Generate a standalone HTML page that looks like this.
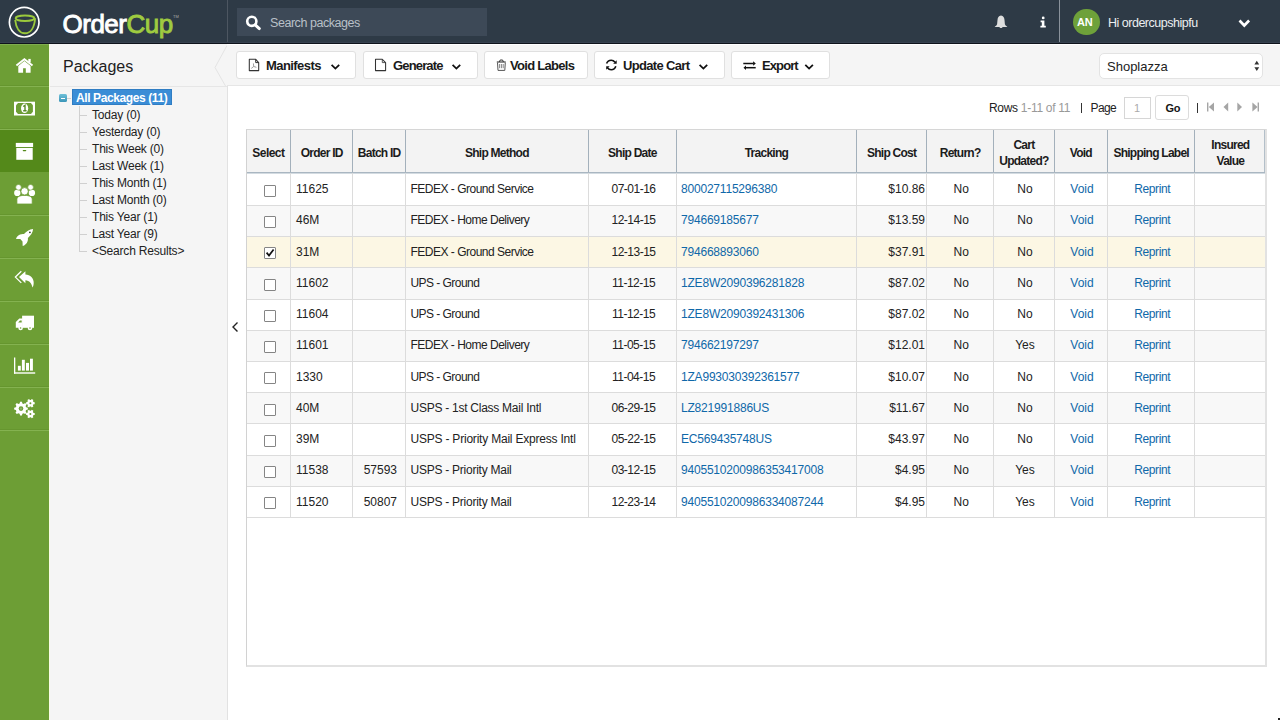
<!DOCTYPE html>
<html><head><meta charset="utf-8">
<style>
*{box-sizing:border-box;margin:0;padding:0}
html,body{width:1280px;height:720px;overflow:hidden;background:#fff;font-family:"Liberation Sans",sans-serif;color:#222}
.a{position:absolute}
.t{position:absolute;white-space:nowrap;line-height:1}
#hdr{left:0;top:0;width:1280px;height:44px;background:#2e3a46;border-bottom:1px solid #0e131b}
#side{left:0;top:44px;width:49px;height:676px;background:#6d9e35}
.sep{position:absolute;left:0;width:49px;height:1px;background:#84b250;box-shadow:0 -1px 0 #66962f}
#panel{left:49px;top:44px;width:179px;height:676px;background:#f5f5f5;border-left:1px solid #fafce6}
#tb{left:227px;top:44px;width:1053px;height:42px;background:#f5f5f5;border-bottom:1px solid #e6e6e6;border-top:1px solid #fff}
.btn{position:absolute;top:51px;height:28px;background:#fff;border:1px solid #e0e0e0;border-radius:3px}
.bt{position:absolute;top:58.5px;font-weight:bold;font-size:13px;color:#1a1a1a;letter-spacing:-0.55px;white-space:nowrap;line-height:1}
svg{position:absolute;overflow:visible}
.th{position:absolute;text-align:center;font-weight:bold;font-size:12px;color:#1c1c1c;line-height:16px;letter-spacing:-0.75px;white-space:nowrap}
.td{position:absolute;font-size:12px;color:#222;line-height:14px;white-space:nowrap}
.m{letter-spacing:-0.4px}
.lk{color:#0f68a9}
.cb{position:absolute;width:12px;height:12px;border:1px solid #858585;background:#fff;border-radius:1px}
.tr{position:absolute;font-size:12px;color:#222;line-height:14px;white-space:nowrap;letter-spacing:-0.2px}

</style></head><body>
<!-- HEADER -->
<div id="hdr" class="a"></div>
<div class="a" style="left:0;top:42px;width:1280px;height:1px;background:#37414f"></div>
<svg style="left:0;top:0" width="50" height="44" viewBox="0 0 50 44">
  <circle cx="24.2" cy="22.2" r="14.8" fill="none" stroke="#fff" stroke-width="1.7"/>
  <path d="M15.2 20 C16 28 19.6 33.3 25 33.3 C30.6 33.3 34.4 27.5 35.1 18.3" fill="none" stroke="#9bc93c" stroke-width="1.9"/>
  <ellipse cx="25" cy="18.3" rx="9.3" ry="2.7" fill="none" stroke="#9bc93c" stroke-width="2"/>
</svg>
<div class="t" style="left:62.5px;top:11px;font-size:26px;letter-spacing:-0.5px;color:#fff;-webkit-text-stroke:0.9px #fff">Order<span style="color:#9fcb40;-webkit-text-stroke:0.9px #9fcb40">Cup</span></div>
<div class="t" style="left:173px;top:15px;font-size:4px;color:#aaa">TM</div>
<div class="a" style="left:227px;top:0;width:1px;height:42px;background:#4d5661"></div>
<div class="a" style="left:237px;top:8px;width:250px;height:28px;background:#3d4957"></div>
<svg style="left:245px;top:15px" width="17" height="15" viewBox="0 0 17 15">
  <circle cx="6.8" cy="6.3" r="4.6" fill="none" stroke="#fff" stroke-width="2.6"/>
  <path d="M10.2 9.8 L14.3 13.6" stroke="#fff" stroke-width="3" stroke-linecap="round"/>
</svg>
<div class="t" style="left:270px;top:17px;font-size:12.5px;color:#b9c0c8;letter-spacing:-0.45px">Search packages</div>
<svg style="left:988px;top:10px" width="26" height="24" viewBox="0 0 26 24">
  <path d="M13 5.6 C10.6 5.8 9.7 7.6 9.5 10 L9.1 14.3 C8.8 15.6 7.6 16.3 6.6 16.9 L19.4 16.9 C18.4 16.3 17.2 15.6 16.9 14.3 L16.5 10 C16.3 7.6 15.4 5.8 13 5.6 Z" fill="#dedede"/>
  <path d="M11.3 16.8 L14.7 16.8 C14.4 18.4 11.6 18.4 11.3 16.8 Z" fill="#dedede"/>
</svg>
<svg style="left:1039px;top:15px" width="9" height="14" viewBox="0 0 9 14">
  <circle cx="4.2" cy="2.9" r="1.4" fill="#fff"/>
  <path d="M1.6 5.6 L5.4 5.6 L5.4 10.8 L6.8 10.8 L6.8 12.5 L1.4 12.5 L1.4 10.8 L2.8 10.8 L2.8 7.3 L1.6 7.3 Z" fill="#fff"/>
</svg>
<div class="a" style="left:1059px;top:0;width:1px;height:42px;background:#8a929b"></div>
<div class="a" style="left:1073px;top:8.5px;width:26.5px;height:26.5px;border-radius:50%;background:#6ea13a"></div>
<div class="t" style="left:1077px;top:17px;font-size:11px;font-weight:bold;color:#fff;letter-spacing:-0.3px">AN</div>
<div class="t" style="left:1108px;top:17px;font-size:12.5px;color:#eceef0;letter-spacing:-0.49px">Hi ordercupshipfu</div>
<svg style="left:1238px;top:19px" width="13" height="9" viewBox="0 0 13 9">
  <path d="M1.5 1.5 L6.3 6.5 L11.1 1.5" fill="none" stroke="#fff" stroke-width="2.6"/>
</svg>

<!-- SIDEBAR -->
<div id="side" class="a"></div>
<div class="a" style="left:0;top:44px;width:49px;height:1px;background:#80ad4f"></div>
<div class="a" style="left:0;top:130px;width:49px;height:42px;background:#54891a"></div>
<div class="sep" style="top:86px"></div>
<div class="sep" style="top:129px"></div>
<div class="sep" style="top:215px"></div>
<div class="sep" style="top:258px"></div>
<div class="sep" style="top:301px"></div>
<div class="sep" style="top:344px"></div>
<div class="sep" style="top:387px"></div>
<div class="sep" style="top:430px"></div>


<!-- SIDEBAR ICONS -->
<svg style="left:10px;top:52px" width="30" height="30" viewBox="0 0 30 30">
  <path d="M8.3 13.9 L14.4 9 L20.6 13.9 L20.6 20.8 L15.8 20.8 L15.8 16.3 L13.1 16.3 L13.1 20.8 L8.3 20.8 Z" fill="#fff"/>
  <path d="M6.4 13.6 L14.4 7.3 L22.5 13.6" fill="none" stroke="#fff" stroke-width="1.9" stroke-linejoin="miter"/>
  <rect x="18.3" y="6.9" width="2.4" height="3.6" fill="#fff"/>
</svg>
<svg style="left:10px;top:94px" width="30" height="30" viewBox="0 0 30 30">
  <rect x="4" y="7.7" width="21" height="13.8" fill="#fff"/>
  <path d="M8 9 L21 9 L22.9 11.3 L22.9 17.7 L21 20 L8 20 L6 17.7 L6 11.3 Z" fill="#6d9e35"/>
  <ellipse cx="14.6" cy="14.3" rx="3.6" ry="4.8" fill="#fff"/>
  <path d="M13.2 12.5 L15 11.3 L15 16.8 M13.2 16.8 L16.6 16.8" fill="none" stroke="#5a8a28" stroke-width="1.4"/>
</svg>
<svg style="left:10px;top:136px" width="30" height="30" viewBox="0 0 30 30">
  <rect x="5.8" y="6.9" width="17.3" height="4.1" fill="#fff"/>
  <rect x="6.3" y="11.9" width="16.4" height="11.9" fill="#fff"/>
  <rect x="12.7" y="13.9" width="3.6" height="1.4" rx="0.7" fill="#54891a"/>
</svg>
<svg style="left:10px;top:179px" width="30" height="30" viewBox="0 0 30 30">
  <ellipse cx="7.3" cy="13.9" rx="3.2" ry="3.1" fill="#fff"/>
  <ellipse cx="21.9" cy="13.9" rx="3.2" ry="3.1" fill="#fff"/>
  <circle cx="8.5" cy="8.3" r="2.8" fill="#fff" stroke="#6d9e35" stroke-width="0.6"/>
  <circle cx="20.6" cy="8.3" r="2.8" fill="#fff" stroke="#6d9e35" stroke-width="0.6"/>
  <path d="M6.9 25 L6.9 20.5 C6.9 17.8 9.5 16.4 14.6 16.4 C19.7 16.4 22.2 17.8 22.2 20.5 L22.2 25 Z" fill="#fff" stroke="#6d9e35" stroke-width="0.8"/>
  <circle cx="14.6" cy="12.3" r="3.7" fill="#fff" stroke="#6d9e35" stroke-width="0.8"/>
</svg>
<svg style="left:10px;top:222px" width="30" height="30" viewBox="0 0 30 30">
  <path d="M23.1 6.9 C19.2 7.2 16.3 9.5 14 12 C11.8 11.7 9.3 12.3 7.5 14.2 C6.8 15 6.2 16 6 16.9 L10.3 17.1 L12.5 19.4 L12.7 24.1 C13.6 23.9 14.8 23.1 15.6 22.3 C17.5 20.5 18.2 18 17.9 15.9 C20.5 13.5 22.9 10.5 23.1 6.9 Z" fill="#fff"/>
  <circle cx="19.9" cy="10.3" r="0.9" fill="#2e4a1a"/>
</svg>
<svg style="left:10px;top:265px" width="30" height="30" viewBox="0 0 30 30">
  <path d="M11.3 6.3 L5.4 12.1 L11.3 17.9" fill="none" stroke="#fff" stroke-width="1.3"/>
  <path d="M9 12.1 L15.4 6.25 L15.4 9.6 C20.3 9.9 23.9 13.3 23.7 18 C23.6 20 23.2 21.5 22.4 22.6 C21.8 18.5 19.4 15.6 15.4 15.3 L15.4 18.3 Z" fill="#fff"/>
</svg>
<svg style="left:10px;top:308px" width="30" height="30" viewBox="0 0 30 30">
  <rect x="12.1" y="7.7" width="11.9" height="12.1" fill="#fff"/>
  <path d="M5.8 19.8 L5.8 13.9 L9.3 10.4 L12.6 10.4 L12.6 19.8 Z" fill="#fff"/>
  <path d="M8.1 14.4 L10 12.5 L11.7 12.5 L11.7 14.4 Z" fill="#6d9e35"/>
  <circle cx="10.6" cy="20" r="2.3" fill="#fff"/>
  <circle cx="20" cy="20" r="2.3" fill="#fff"/>
  <circle cx="10.6" cy="20" r="0.8" fill="#6d9e35"/>
  <circle cx="20" cy="20" r="0.8" fill="#6d9e35"/>
</svg>
<svg style="left:10px;top:351px" width="30" height="30" viewBox="0 0 30 30">
  <rect x="4" y="6.5" width="1.3" height="16.2" fill="#fff"/>
  <rect x="4" y="21.3" width="21.2" height="1.4" fill="#fff"/>
  <rect x="7.9" y="14.8" width="2.9" height="4.8" fill="#fff"/>
  <rect x="11.9" y="8.8" width="2.9" height="10.8" fill="#fff"/>
  <rect x="16" y="11.9" width="3" height="7.7" fill="#fff"/>
  <rect x="20" y="7.7" width="2.9" height="11.9" fill="#fff"/>
</svg>
<svg style="left:10px;top:394px" width="30" height="30" viewBox="0 0 30 30">
  <path d="M16.13 13.25 L17.84 13.66 L17.84 15.54 L16.13 15.95 L15.58 17.27 L16.50 18.77 L15.17 20.10 L13.67 19.18 L12.35 19.73 L11.94 21.44 L10.06 21.44 L9.65 19.73 L8.33 19.18 L6.83 20.10 L5.50 18.77 L6.42 17.27 L5.87 15.95 L4.16 15.54 L4.16 13.66 L5.87 13.25 L6.42 11.93 L5.50 10.43 L6.83 9.10 L8.33 10.02 L9.65 9.47 L10.06 7.76 L11.94 7.76 L12.35 9.47 L13.67 10.02 L15.17 9.10 L16.50 10.43 L15.58 11.93 Z" fill="#fff"/>
  <circle cx="11" cy="14.6" r="2.3" fill="#6d9e35"/>
  <circle cx="11" cy="14.6" r="1.2" fill="#8fb865"/>
  <path d="M23.51 8.09 L24.69 8.23 L24.69 10.17 L23.51 10.31 L22.91 11.34 L23.38 12.43 L21.71 13.40 L21.00 12.45 L19.80 12.45 L19.09 13.40 L17.42 12.43 L17.89 11.34 L17.29 10.31 L16.11 10.17 L16.11 8.23 L17.29 8.09 L17.89 7.06 L17.42 5.97 L19.09 5.00 L19.80 5.95 L21.00 5.95 L21.71 5.00 L23.38 5.97 L22.91 7.06 Z" fill="#fff"/>
  <circle cx="20.4" cy="9.2" r="1" fill="#6d9e35"/>
  <path d="M23.51 18.89 L24.69 19.03 L24.69 20.97 L23.51 21.11 L22.91 22.14 L23.38 23.23 L21.71 24.20 L21.00 23.25 L19.80 23.25 L19.09 24.20 L17.42 23.23 L17.89 22.14 L17.29 21.11 L16.11 20.97 L16.11 19.03 L17.29 18.89 L17.89 17.86 L17.42 16.77 L19.09 15.80 L19.80 16.75 L21.00 16.75 L21.71 15.80 L23.38 16.77 L22.91 17.86 Z" fill="#fff"/>
  <circle cx="20.4" cy="20" r="1" fill="#6d9e35"/>
</svg>

<!-- PANEL -->
<div id="panel" class="a"></div>
<div class="t" style="left:63px;top:58.5px;font-size:16px;color:#1e1e1e">Packages</div>
<div class="a" style="left:50px;top:86px;width:177px;height:1px;background:#e6e6e6"></div>
<div class="a" style="left:227px;top:86px;width:1px;height:634px;background:#e2e2e2"></div>
<svg style="left:210px;top:44px" width="20" height="44" viewBox="0 0 20 44"><path d="M17 1.5 L5 23.5 L15.5 42" fill="none" stroke="#e4e4e4" stroke-width="1"/></svg>

<!-- TOOLBAR -->
<div id="tb" class="a"></div>
<div class="btn" style="left:236px;width:120px"></div>
<div class="btn" style="left:363px;width:115px"></div>
<div class="btn" style="left:484px;width:104px"></div>
<div class="btn" style="left:594px;width:131px"></div>
<div class="btn" style="left:731px;width:99px"></div>
<div class="bt" style="left:266px;letter-spacing:-0.57px">Manifests</div>
<div class="bt" style="left:393px;letter-spacing:-0.84px">Generate</div>
<div class="bt" style="left:510px;letter-spacing:-0.71px">Void Labels</div>
<div class="bt" style="left:623px;letter-spacing:-0.66px">Update Cart</div>
<div class="bt" style="left:762px;letter-spacing:-0.9px">Export</div>
<div class="a" style="left:1099px;top:53px;width:164px;height:26px;background:#fff;border:1px solid #e3e3e3;border-radius:5px"></div>
<div class="t" style="left:1107px;top:60px;font-size:13px;color:#222">Shoplazza</div>


<!-- TOOLBAR ICONS -->
<svg style="left:244px;top:54px" width="30" height="24" viewBox="0 0 30 24">
  <path d="M5.3 5.3 L11.7 5.3 L14.7 8.6 L14.7 16.6 L5.3 16.6 Z" fill="none" stroke="#333" stroke-width="1.05" stroke-linejoin="round"/>
  <path d="M11.7 5.3 L11.7 8.6 L14.7 8.6" fill="none" stroke="#333" stroke-width="1"/>
  <path d="M7.3 14.4 L9.7 12.5 L12.4 13.3 M9.7 12.5 L9.4 9.4" fill="none" stroke="#888" stroke-width="0.8"/>
</svg>
<svg style="left:372px;top:54px" width="24" height="24" viewBox="0 0 24 24">
  <path d="M3.5 5.3 L10.3 5.3 L13.6 8.6 L13.6 16.6 L3.5 16.6 Z" fill="none" stroke="#333" stroke-width="1.05" stroke-linejoin="round"/>
  <path d="M10.3 5.3 L10.3 8.6 L13.6 8.6" fill="none" stroke="#444" stroke-width="0.9"/>
</svg>
<svg style="left:492px;top:54px" width="24" height="24" viewBox="0 0 24 24">
  <path d="M4.8 8 L13.7 8" stroke="#333" stroke-width="1.1"/>
  <path d="M7.4 8 L8.2 6 L10.6 6 L11.4 8" fill="none" stroke="#333" stroke-width="1"/>
  <path d="M5.5 8.6 L6 16.4 L12.8 16.4 L13.3 8.6" fill="none" stroke="#555" stroke-width="1"/>
  <path d="M7.6 10 L7.6 14.2 M9.4 10 L9.4 14.2 M11.2 10 L11.2 14.2" stroke="#666" stroke-width="0.8"/>
</svg>
<svg style="left:600px;top:54px" width="24" height="24" viewBox="0 0 24 24">
  <path d="M6.6 9.6 C7.4 7.2 9.2 6.2 11.2 6.2 C12.8 6.2 14.1 7 15 8.2" fill="none" stroke="#111" stroke-width="1.6"/>
  <path d="M16.7 6.2 L16.7 9.8 L13.2 9.8 Z" fill="#111"/>
  <path d="M15.8 12.3 C15 14.7 13.2 15.7 11.2 15.7 C9.6 15.7 8.3 14.9 7.4 13.7" fill="none" stroke="#111" stroke-width="1.6"/>
  <path d="M6.2 15.7 L6.2 12.3 L9.6 12.3 Z" fill="#111"/>
</svg>
<svg style="left:738px;top:54px" width="24" height="24" viewBox="0 0 24 24">
  <path d="M5.3 9.5 L15.5 9.5" stroke="#111" stroke-width="1.5"/>
  <path d="M15.1 7.3 L17.8 9.5 L15.1 11.7 Z" fill="#111"/>
  <path d="M17.7 13.7 L7.6 13.7" stroke="#111" stroke-width="1.5"/>
  <path d="M8 11.5 L5.5 13.7 L8 15.9 Z" fill="#111"/>
</svg>
<svg style="left:0;top:0" width="1280" height="100" viewBox="0 0 1280 100">
  <path d="M331.6 64.9 L335.4 68.6 L339.2 64.9" fill="none" stroke="#111" stroke-width="1.8"/>
  <path d="M452.6 64.9 L456.4 68.6 L460.2 64.9" fill="none" stroke="#111" stroke-width="1.8"/>
  <path d="M699.6 64.9 L703.4 68.6 L707.2 64.9" fill="none" stroke="#111" stroke-width="1.8"/>
  <path d="M805.3 64.9 L809.1 68.6 L812.9 64.9" fill="none" stroke="#111" stroke-width="1.8"/>
</svg>
<!-- select arrows -->
<svg style="left:1254px;top:60px" width="6" height="12" viewBox="0 0 6 12">
  <path d="M0.4 4.6 L2.8 0.8 L5.2 4.6 Z M0.4 7.2 L2.8 11 L5.2 7.2 Z" fill="#333"/>
</svg>

<!-- TREE -->
<div class="a" style="left:78.5px;top:106px;width:1px;height:145px;background:#d0d0d0"></div>
<div class="a" style="left:79px;top:114.5px;width:8px;height:1px;background:#d0d0d0"></div>
<div class="tr" style="left:92px;top:108.0px">Today (0)</div>
<div class="a" style="left:79px;top:131.5px;width:8px;height:1px;background:#d0d0d0"></div>
<div class="tr" style="left:92px;top:125.0px">Yesterday (0)</div>
<div class="a" style="left:79px;top:148.5px;width:8px;height:1px;background:#d0d0d0"></div>
<div class="tr" style="left:92px;top:142.0px">This Week (0)</div>
<div class="a" style="left:79px;top:165.5px;width:8px;height:1px;background:#d0d0d0"></div>
<div class="tr" style="left:92px;top:159.0px">Last Week (1)</div>
<div class="a" style="left:79px;top:182.5px;width:8px;height:1px;background:#d0d0d0"></div>
<div class="tr" style="left:92px;top:176.0px">This Month (1)</div>
<div class="a" style="left:79px;top:199.5px;width:8px;height:1px;background:#d0d0d0"></div>
<div class="tr" style="left:92px;top:193.0px">Last Month (0)</div>
<div class="a" style="left:79px;top:216.5px;width:8px;height:1px;background:#d0d0d0"></div>
<div class="tr" style="left:92px;top:210.0px">This Year (1)</div>
<div class="a" style="left:79px;top:233.5px;width:8px;height:1px;background:#d0d0d0"></div>
<div class="tr" style="left:92px;top:227.0px">Last Year (9)</div>
<div class="a" style="left:79px;top:250.5px;width:8px;height:1px;background:#d0d0d0"></div>
<div class="tr" style="left:92px;top:244.0px">&lt;Search Results&gt;</div>
<div class="a" style="left:71.5px;top:89px;width:100px;height:16px;background:#3a8dd6;border:1px solid #2f7dc3"></div>
<div class="t" style="left:76px;top:92px;font-size:12px;font-weight:bold;color:#fff;letter-spacing:-0.4px">All Packages (11)</div>
<div class="a" style="left:58.5px;top:94px;width:8.5px;height:8px;background:linear-gradient(#6fc0d8,#3a95b8);border-radius:1.5px"></div>
<div class="a" style="left:60.5px;top:97.5px;width:4.5px;height:1.2px;background:#fff"></div>
<div class="a" style="left:67px;top:97.5px;width:4px;height:1px;background:#d0d0d0"></div>
<!-- collapse arrow -->
<svg style="left:231px;top:321px" width="8" height="12" viewBox="0 0 8 12"><path d="M6.5 1.5 L2 6 L6.5 10.5" fill="none" stroke="#222" stroke-width="1.4"/></svg>
<!-- PAGER -->
<div class="t" style="left:989px;top:101.5px;font-size:12px;color:#222;letter-spacing:-0.3px">Rows <span style="color:#999">1-11 of 11</span></div>
<div class="a" style="left:1080.5px;top:103px;width:1.4px;height:10px;background:#333"></div>
<div class="t" style="left:1090.5px;top:101.5px;font-size:12px;color:#222;letter-spacing:-0.6px">Page</div>
<div class="a" style="left:1124px;top:97px;width:26.5px;height:22px;border:1px solid #d6d6d6;background:#fff"></div>
<div class="t" style="left:1134px;top:103px;font-size:11px;color:#aaa">1</div>
<div class="a" style="left:1155px;top:95px;width:33.5px;height:24.5px;border:1px solid #dcdcdc;border-radius:3px;background:#fff"></div>
<div class="t" style="left:1165.5px;top:102.5px;font-size:11px;font-weight:bold;color:#151515;letter-spacing:-0.3px">Go</div>
<div class="a" style="left:1196.7px;top:103px;width:1.4px;height:10px;background:#333"></div>
<svg style="left:1207px;top:102px" width="60" height="10" viewBox="0 0 60 10">
 <rect x="0" y="0.5" width="1.4" height="9" fill="#a5a5a5"/><path d="M7 0.5 L1.8 5 L7 9.5 Z" fill="#a5a5a5"/>
 <path d="M21.2 0.5 L16.5 5 L21.2 9.5 Z" fill="#a5a5a5"/>
 <path d="M30.3 0.5 L35 5 L30.3 9.5 Z" fill="#a5a5a5"/>
 <path d="M45.4 0.5 L50.6 5 L45.4 9.5 Z" fill="#a5a5a5"/><rect x="50.6" y="0.5" width="1.4" height="9" fill="#a5a5a5"/>
</svg>
<!-- TABLE -->
<div class="a" style="left:246px;top:129px;width:1021px;height:538px;border:1px solid #d2d2d2;border-top-color:#d6d6d6;border-right:2px solid #e2e2e2;border-bottom:2px solid #e2e2e2"></div>
<div class="a" style="left:247px;top:130px;width:1018px;height:42px;background:#f3f3f3"></div>
<div class="a" style="left:247px;top:173.00px;width:1018px;height:32.00px;background:#ffffff"></div>
<div class="a" style="left:247px;top:205.00px;width:1018px;height:31.24px;background:#f8f8f8"></div>
<div class="a" style="left:247px;top:236.24px;width:1018px;height:31.24px;background:#fcf7e4"></div>
<div class="a" style="left:247px;top:267.48px;width:1018px;height:31.24px;background:#f8f8f8"></div>
<div class="a" style="left:247px;top:298.72px;width:1018px;height:31.24px;background:#ffffff"></div>
<div class="a" style="left:247px;top:329.96px;width:1018px;height:31.24px;background:#f8f8f8"></div>
<div class="a" style="left:247px;top:361.20px;width:1018px;height:31.24px;background:#ffffff"></div>
<div class="a" style="left:247px;top:392.44px;width:1018px;height:31.24px;background:#f8f8f8"></div>
<div class="a" style="left:247px;top:423.68px;width:1018px;height:31.24px;background:#ffffff"></div>
<div class="a" style="left:247px;top:454.92px;width:1018px;height:31.24px;background:#f8f8f8"></div>
<div class="a" style="left:247px;top:486.16px;width:1018px;height:31.24px;background:#ffffff"></div>
<div class="a" style="left:247px;top:204.80px;width:1018px;height:1px;background:#dcdcdc"></div>
<div class="a" style="left:247px;top:236.04px;width:1018px;height:1px;background:#dcdcdc"></div>
<div class="a" style="left:247px;top:267.28px;width:1018px;height:1px;background:#dcdcdc"></div>
<div class="a" style="left:247px;top:298.52px;width:1018px;height:1px;background:#dcdcdc"></div>
<div class="a" style="left:247px;top:329.76px;width:1018px;height:1px;background:#dcdcdc"></div>
<div class="a" style="left:247px;top:361.00px;width:1018px;height:1px;background:#dcdcdc"></div>
<div class="a" style="left:247px;top:392.24px;width:1018px;height:1px;background:#dcdcdc"></div>
<div class="a" style="left:247px;top:423.48px;width:1018px;height:1px;background:#dcdcdc"></div>
<div class="a" style="left:247px;top:454.72px;width:1018px;height:1px;background:#dcdcdc"></div>
<div class="a" style="left:247px;top:485.96px;width:1018px;height:1px;background:#dcdcdc"></div>
<div class="a" style="left:247px;top:517.20px;width:1018px;height:1px;background:#dcdcdc"></div>
<div class="a" style="left:247px;top:172px;width:1018px;height:1px;background:#a9b6c1"></div>
<div class="a" style="left:247px;top:173px;width:1018px;height:1px;background:#d3dbe1"></div>
<div class="a" style="left:1264px;top:130px;width:1px;height:42px;background:#b3bfc9"></div>
<div class="a" style="left:289.5px;top:130px;width:1px;height:42px;background:#a3b0bb"></div>
<div class="a" style="left:289.5px;top:173px;width:1px;height:344.4px;background:#dcdcdc"></div>
<div class="a" style="left:352.0px;top:130px;width:1px;height:42px;background:#a3b0bb"></div>
<div class="a" style="left:352.0px;top:173px;width:1px;height:344.4px;background:#dcdcdc"></div>
<div class="a" style="left:404.5px;top:130px;width:1px;height:42px;background:#a3b0bb"></div>
<div class="a" style="left:404.5px;top:173px;width:1px;height:344.4px;background:#dcdcdc"></div>
<div class="a" style="left:587.5px;top:130px;width:1px;height:42px;background:#a3b0bb"></div>
<div class="a" style="left:587.5px;top:173px;width:1px;height:344.4px;background:#dcdcdc"></div>
<div class="a" style="left:675.5px;top:130px;width:1px;height:42px;background:#a3b0bb"></div>
<div class="a" style="left:675.5px;top:173px;width:1px;height:344.4px;background:#dcdcdc"></div>
<div class="a" style="left:855.5px;top:130px;width:1px;height:42px;background:#a3b0bb"></div>
<div class="a" style="left:855.5px;top:173px;width:1px;height:344.4px;background:#dcdcdc"></div>
<div class="a" style="left:926.0px;top:130px;width:1px;height:42px;background:#a3b0bb"></div>
<div class="a" style="left:926.0px;top:173px;width:1px;height:344.4px;background:#dcdcdc"></div>
<div class="a" style="left:992.5px;top:130px;width:1px;height:42px;background:#a3b0bb"></div>
<div class="a" style="left:992.5px;top:173px;width:1px;height:344.4px;background:#dcdcdc"></div>
<div class="a" style="left:1053.5px;top:130px;width:1px;height:42px;background:#a3b0bb"></div>
<div class="a" style="left:1053.5px;top:173px;width:1px;height:344.4px;background:#dcdcdc"></div>
<div class="a" style="left:1106.5px;top:130px;width:1px;height:42px;background:#a3b0bb"></div>
<div class="a" style="left:1106.5px;top:173px;width:1px;height:344.4px;background:#dcdcdc"></div>
<div class="a" style="left:1194.0px;top:130px;width:1px;height:42px;background:#a3b0bb"></div>
<div class="a" style="left:1194.0px;top:173px;width:1px;height:344.4px;background:#dcdcdc"></div>
<div class="th" style="left:246.4px;width:44.0px;top:144.5px;letter-spacing:-0.55px">Select</div>
<div class="th" style="left:290.4px;width:62.5px;top:144.5px">Order ID</div>
<div class="th" style="left:352.9px;width:52.5px;top:144.5px">Batch ID</div>
<div class="th" style="left:405.4px;width:183.0px;top:144.5px">Ship Method</div>
<div class="th" style="left:588.4px;width:88.0px;top:144.5px">Ship Date</div>
<div class="th" style="left:676.4px;width:180.0px;top:144.5px">Tracking</div>
<div class="th" style="left:856.4px;width:70.5px;top:144.5px">Ship Cost</div>
<div class="th" style="left:926.9px;width:66.5px;top:144.5px">Return?</div>
<div class="th" style="left:993.4px;width:61.0px;top:136.5px">Cart<br>Updated?</div>
<div class="th" style="left:1054.4px;width:53.0px;top:144.5px">Void</div>
<div class="th" style="left:1107.4px;width:87.5px;top:144.5px">Shipping Label</div>
<div class="th" style="left:1194.9px;width:71.0px;top:136.5px">Insured<br>Value</div>
<div class="cb" style="left:264px;top:185.0px"></div>
<div class="td" style="left:296px;top:182.2px">11625</div>
<div class="td" style="left:410.5px;top:182.2px;letter-spacing:-0.5px">FEDEX - Ground Service</div>
<div class="td" style="left:589.5px;width:88px;text-align:center;top:182.2px;letter-spacing:-0.5px">07-01-16</div>
<div class="td lk" style="left:681px;top:182.2px;letter-spacing:-0.2px">800027115296380</div>
<div class="td" style="left:856px;width:69px;text-align:right;top:182.2px">$10.86</div>
<div class="td" style="left:928px;width:66.5px;text-align:center;top:182.2px">No</div>
<div class="td" style="left:994.5px;width:61px;text-align:center;top:182.2px">No</div>
<div class="td lk" style="left:1055.5px;width:53px;text-align:center;top:182.2px">Void</div>
<div class="td lk m" style="left:1108.5px;width:87.5px;text-align:center;top:182.2px">Reprint</div>
<div class="cb" style="left:264px;top:216.2px"></div>
<div class="td" style="left:296px;top:213.4px">46M</div>
<div class="td" style="left:410.5px;top:213.4px;letter-spacing:-0.5px">FEDEX - Home Delivery</div>
<div class="td" style="left:589.5px;width:88px;text-align:center;top:213.4px;letter-spacing:-0.5px">12-14-15</div>
<div class="td lk" style="left:681px;top:213.4px;letter-spacing:-0.2px">794669185677</div>
<div class="td" style="left:856px;width:69px;text-align:right;top:213.4px">$13.59</div>
<div class="td" style="left:928px;width:66.5px;text-align:center;top:213.4px">No</div>
<div class="td" style="left:994.5px;width:61px;text-align:center;top:213.4px">No</div>
<div class="td lk" style="left:1055.5px;width:53px;text-align:center;top:213.4px">Void</div>
<div class="td lk m" style="left:1108.5px;width:87.5px;text-align:center;top:213.4px">Reprint</div>
<div class="cb" style="left:264px;top:247.4px"></div>
<svg style="left:264px;top:247.4px" width="12" height="12" viewBox="0 0 12 12"><path d="M2.6 5.6 L5 8.6 L9.6 2.4" fill="none" stroke="#111" stroke-width="1.7"/></svg>
<div class="td" style="left:296px;top:244.6px">31M</div>
<div class="td" style="left:410.5px;top:244.6px;letter-spacing:-0.5px">FEDEX - Ground Service</div>
<div class="td" style="left:589.5px;width:88px;text-align:center;top:244.6px;letter-spacing:-0.5px">12-13-15</div>
<div class="td lk" style="left:681px;top:244.6px;letter-spacing:-0.2px">794668893060</div>
<div class="td" style="left:856px;width:69px;text-align:right;top:244.6px">$37.91</div>
<div class="td" style="left:928px;width:66.5px;text-align:center;top:244.6px">No</div>
<div class="td" style="left:994.5px;width:61px;text-align:center;top:244.6px">No</div>
<div class="td lk" style="left:1055.5px;width:53px;text-align:center;top:244.6px">Void</div>
<div class="td lk m" style="left:1108.5px;width:87.5px;text-align:center;top:244.6px">Reprint</div>
<div class="cb" style="left:264px;top:278.7px"></div>
<div class="td" style="left:296px;top:275.9px">11602</div>
<div class="td" style="left:410.5px;top:275.9px;letter-spacing:-0.55px">UPS - Ground</div>
<div class="td" style="left:589.5px;width:88px;text-align:center;top:275.9px;letter-spacing:-0.5px">11-12-15</div>
<div class="td lk" style="left:681px;top:275.9px;letter-spacing:-0.2px">1ZE8W2090396281828</div>
<div class="td" style="left:856px;width:69px;text-align:right;top:275.9px">$87.02</div>
<div class="td" style="left:928px;width:66.5px;text-align:center;top:275.9px">No</div>
<div class="td" style="left:994.5px;width:61px;text-align:center;top:275.9px">No</div>
<div class="td lk" style="left:1055.5px;width:53px;text-align:center;top:275.9px">Void</div>
<div class="td lk m" style="left:1108.5px;width:87.5px;text-align:center;top:275.9px">Reprint</div>
<div class="cb" style="left:264px;top:309.9px"></div>
<div class="td" style="left:296px;top:307.1px">11604</div>
<div class="td" style="left:410.5px;top:307.1px;letter-spacing:-0.55px">UPS - Ground</div>
<div class="td" style="left:589.5px;width:88px;text-align:center;top:307.1px;letter-spacing:-0.5px">11-12-15</div>
<div class="td lk" style="left:681px;top:307.1px;letter-spacing:-0.2px">1ZE8W2090392431306</div>
<div class="td" style="left:856px;width:69px;text-align:right;top:307.1px">$87.02</div>
<div class="td" style="left:928px;width:66.5px;text-align:center;top:307.1px">No</div>
<div class="td" style="left:994.5px;width:61px;text-align:center;top:307.1px">No</div>
<div class="td lk" style="left:1055.5px;width:53px;text-align:center;top:307.1px">Void</div>
<div class="td lk m" style="left:1108.5px;width:87.5px;text-align:center;top:307.1px">Reprint</div>
<div class="cb" style="left:264px;top:341.2px"></div>
<div class="td" style="left:296px;top:338.4px">11601</div>
<div class="td" style="left:410.5px;top:338.4px;letter-spacing:-0.5px">FEDEX - Home Delivery</div>
<div class="td" style="left:589.5px;width:88px;text-align:center;top:338.4px;letter-spacing:-0.5px">11-05-15</div>
<div class="td lk" style="left:681px;top:338.4px;letter-spacing:-0.2px">794662197297</div>
<div class="td" style="left:856px;width:69px;text-align:right;top:338.4px">$12.01</div>
<div class="td" style="left:928px;width:66.5px;text-align:center;top:338.4px">No</div>
<div class="td" style="left:994.5px;width:61px;text-align:center;top:338.4px">Yes</div>
<div class="td lk" style="left:1055.5px;width:53px;text-align:center;top:338.4px">Void</div>
<div class="td lk m" style="left:1108.5px;width:87.5px;text-align:center;top:338.4px">Reprint</div>
<div class="cb" style="left:264px;top:372.4px"></div>
<div class="td" style="left:296px;top:369.6px">1330</div>
<div class="td" style="left:410.5px;top:369.6px;letter-spacing:-0.55px">UPS - Ground</div>
<div class="td" style="left:589.5px;width:88px;text-align:center;top:369.6px;letter-spacing:-0.5px">11-04-15</div>
<div class="td lk" style="left:681px;top:369.6px;letter-spacing:-0.2px">1ZA993030392361577</div>
<div class="td" style="left:856px;width:69px;text-align:right;top:369.6px">$10.07</div>
<div class="td" style="left:928px;width:66.5px;text-align:center;top:369.6px">No</div>
<div class="td" style="left:994.5px;width:61px;text-align:center;top:369.6px">No</div>
<div class="td lk" style="left:1055.5px;width:53px;text-align:center;top:369.6px">Void</div>
<div class="td lk m" style="left:1108.5px;width:87.5px;text-align:center;top:369.6px">Reprint</div>
<div class="cb" style="left:264px;top:403.6px"></div>
<div class="td" style="left:296px;top:400.8px">40M</div>
<div class="td" style="left:410.5px;top:400.8px;letter-spacing:-0.26px">USPS - 1st Class Mail Intl</div>
<div class="td" style="left:589.5px;width:88px;text-align:center;top:400.8px;letter-spacing:-0.5px">06-29-15</div>
<div class="td lk" style="left:681px;top:400.8px;letter-spacing:-0.2px">LZ821991886US</div>
<div class="td" style="left:856px;width:69px;text-align:right;top:400.8px">$11.67</div>
<div class="td" style="left:928px;width:66.5px;text-align:center;top:400.8px">No</div>
<div class="td" style="left:994.5px;width:61px;text-align:center;top:400.8px">No</div>
<div class="td lk" style="left:1055.5px;width:53px;text-align:center;top:400.8px">Void</div>
<div class="td lk m" style="left:1108.5px;width:87.5px;text-align:center;top:400.8px">Reprint</div>
<div class="cb" style="left:264px;top:434.9px"></div>
<div class="td" style="left:296px;top:432.1px">39M</div>
<div class="td" style="left:410.5px;top:432.1px;letter-spacing:-0.21px">USPS - Priority Mail Express Intl</div>
<div class="td" style="left:589.5px;width:88px;text-align:center;top:432.1px;letter-spacing:-0.5px">05-22-15</div>
<div class="td lk" style="left:681px;top:432.1px;letter-spacing:-0.2px">EC569435748US</div>
<div class="td" style="left:856px;width:69px;text-align:right;top:432.1px">$43.97</div>
<div class="td" style="left:928px;width:66.5px;text-align:center;top:432.1px">No</div>
<div class="td" style="left:994.5px;width:61px;text-align:center;top:432.1px">No</div>
<div class="td lk" style="left:1055.5px;width:53px;text-align:center;top:432.1px">Void</div>
<div class="td lk m" style="left:1108.5px;width:87.5px;text-align:center;top:432.1px">Reprint</div>
<div class="cb" style="left:264px;top:466.1px"></div>
<div class="td" style="left:296px;top:463.3px">11538</div>
<div class="td" style="left:352.5px;width:44.5px;text-align:right;top:463.3px">57593</div>
<div class="td" style="left:410.5px;top:463.3px;letter-spacing:-0.25px">USPS - Priority Mail</div>
<div class="td" style="left:589.5px;width:88px;text-align:center;top:463.3px;letter-spacing:-0.5px">03-12-15</div>
<div class="td lk" style="left:681px;top:463.3px;letter-spacing:-0.2px">9405510200986353417008</div>
<div class="td" style="left:856px;width:69px;text-align:right;top:463.3px">$4.95</div>
<div class="td" style="left:928px;width:66.5px;text-align:center;top:463.3px">No</div>
<div class="td" style="left:994.5px;width:61px;text-align:center;top:463.3px">Yes</div>
<div class="td lk" style="left:1055.5px;width:53px;text-align:center;top:463.3px">Void</div>
<div class="td lk m" style="left:1108.5px;width:87.5px;text-align:center;top:463.3px">Reprint</div>
<div class="cb" style="left:264px;top:497.4px"></div>
<div class="td" style="left:296px;top:494.6px">11520</div>
<div class="td" style="left:352.5px;width:44.5px;text-align:right;top:494.6px">50807</div>
<div class="td" style="left:410.5px;top:494.6px;letter-spacing:-0.25px">USPS - Priority Mail</div>
<div class="td" style="left:589.5px;width:88px;text-align:center;top:494.6px;letter-spacing:-0.5px">12-23-14</div>
<div class="td lk" style="left:681px;top:494.6px;letter-spacing:-0.2px">9405510200986334087244</div>
<div class="td" style="left:856px;width:69px;text-align:right;top:494.6px">$4.95</div>
<div class="td" style="left:928px;width:66.5px;text-align:center;top:494.6px">No</div>
<div class="td" style="left:994.5px;width:61px;text-align:center;top:494.6px">Yes</div>
<div class="td lk" style="left:1055.5px;width:53px;text-align:center;top:494.6px">Void</div>
<div class="td lk m" style="left:1108.5px;width:87.5px;text-align:center;top:494.6px">Reprint</div>
<div class="a" style="left:1278px;top:718px;width:2px;height:2px;background:#222"></div>
</body></html>
